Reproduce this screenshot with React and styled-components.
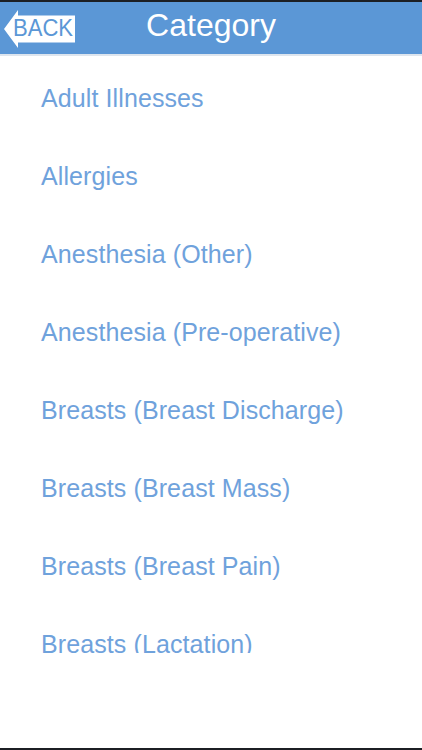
import React from "react";
import styled, { createGlobalStyle } from "styled-components";

const Global = createGlobalStyle`
  html, body { margin: 0; padding: 0; background: #fff; }
  body { font-family: "Liberation Sans", Arial, sans-serif; }
`;

const Screen = styled.div`
  width: 422px;
  height: 750px;
  display: flex;
  flex-direction: column;
  background: #fff;
  border-top: 2px solid #1c1f24;
  border-bottom: 2px solid #1c1f24;
  box-sizing: border-box;
  overflow: hidden;
`;

const Header = styled.header`
  height: 52px;
  flex: none;
  background: #5b97d6;
  border-bottom: 2px solid #dde5ee;
  display: grid;
  grid-template-columns: 1fr auto 1fr;
  align-items: start;
`;

const BackButton = styled.button`
  justify-self: start;
  margin: 8px 0 0 4px;
  padding: 0;
  border: 0;
  background: none;
  cursor: pointer;
  display: block;
  line-height: 0;
`;

const Title = styled.h1`
  margin: 0;
  font-size: 32px;
  font-weight: 400;
  line-height: 46px;
  color: #fff;
`;

const List = styled.ul`
  list-style: none;
  margin: 0;
  padding: 3px 0 0;
  height: 597px;
  box-sizing: border-box;
  flex: none;
  overflow: hidden;
`;

const Row = styled.li`
  height: 78px;
  padding: 0 0 0 41px;
  box-sizing: border-box;
  font-size: 25px;
  line-height: 78px;
  letter-spacing: 0.1px;
  color: #6fa2dc;
  white-space: nowrap;
`;

const items = [
  "Adult Illnesses",
  "Allergies",
  "Anesthesia (Other)",
  "Anesthesia (Pre-operative)",
  "Breasts (Breast Discharge)",
  "Breasts (Breast Mass)",
  "Breasts (Breast Pain)",
  "Breasts (Lactation)",
];

function BackArrow() {
  return (
    <svg width="72" height="38" viewBox="0 0 72 38">
      <polygon
        points="0,19 14,0 14,5.5 71,5.5 71,32.5 14,32.5 14,38"
        fill="#fff"
      />
      <text
        x="9"
        y="26"
        fontSize="24"
        fontFamily="Liberation Sans, Arial, sans-serif"
        fill="#5b97d6"
        textLength="60"
        lengthAdjust="spacingAndGlyphs"
      >
        BACK
      </text>
    </svg>
  );
}

export default function App() {
  return (
    <>
      <Global />
      <Screen>
        <Header>
          <BackButton aria-label="Back">
            <BackArrow />
          </BackButton>
          <Title>Category</Title>
          <span />
        </Header>
        <List>
          {items.map((t) => (
            <Row key={t}>{t}</Row>
          ))}
        </List>
      </Screen>
    </>
  );
}
